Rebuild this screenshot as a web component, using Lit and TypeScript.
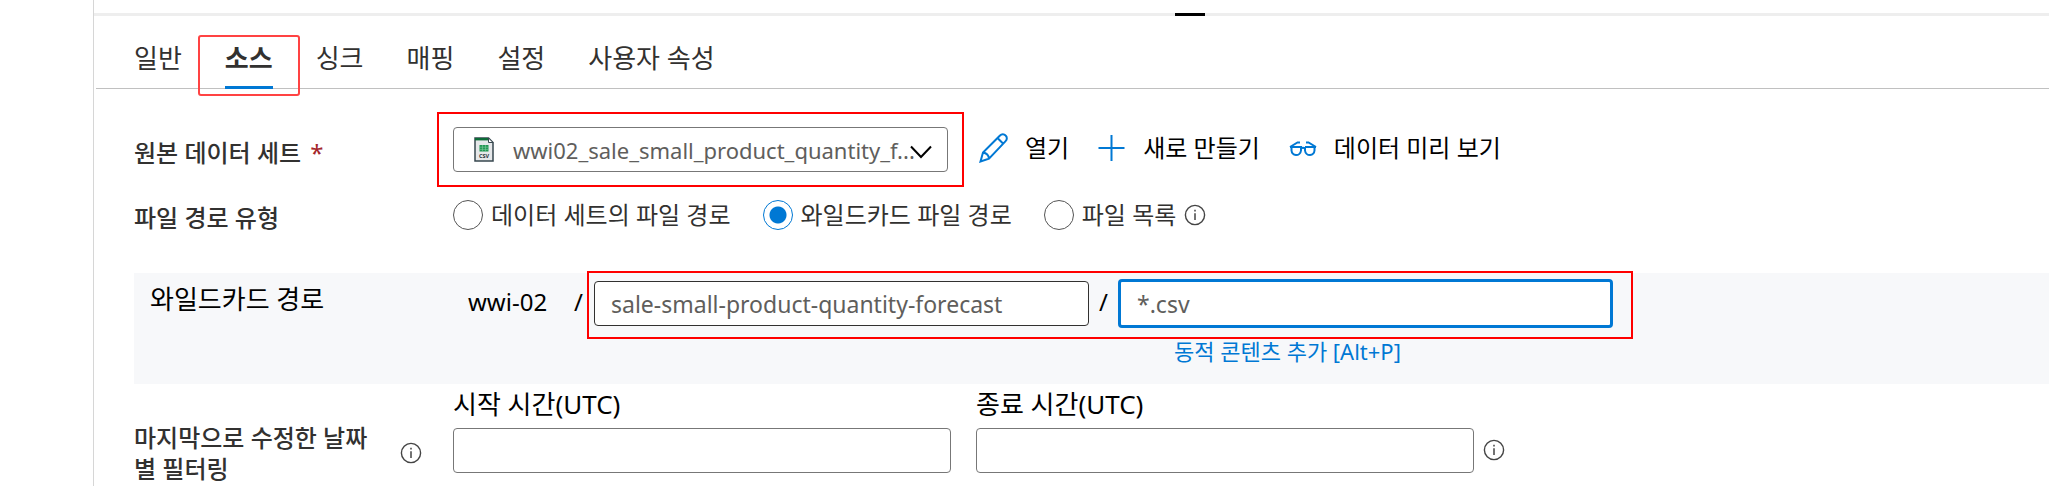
import { LitElement, html, css, svg } from "lit";
import { customElement, state } from "lit/decorators.js";

const infoIcon = html`<svg class="info" viewBox="0 0 22 22" role="img" aria-label="정보">
  <circle cx="11" cy="11" r="9.6" fill="none" stroke="#444" stroke-width="1.4" />
  <path d="M11 9.2V16M11 5.8V7.4" stroke="#444" stroke-width="1.5" fill="none" />
</svg>`;

const pencilIcon = svg`<path d="M1.5 28.5 4 19.5 21 2.5a3.8 3.8 0 0 1 5.6 0 3.8 3.8 0 0 1 0 5.6L10 25.6ZM4 19.5Q9.500 20.500 10 25.600M18.500 5 24.500 11" />`;
const plusIcon = svg`<path d="M14.500 2V28M1.500 15H27.500" />`;
const glassesIcon = svg`<path d="M2 14H13V17.500a5 5 0 0 1-5 4.500 5 5 0 0 1-4.500-4.500V14M17 14H28M26.500 14V17.500a5 5 0 0 1-4.500 4.500 5 5 0 0 1-5-4.500V14M13 15.500q2-1.600 4 0M2 14 9.500 9.500H12M28 14 20.500 9.500H18" />`;

const tabs = ["일반", "소스", "싱크", "매핑", "설정", "사용자 속성"];
const pathTypes = ["데이터 세트의 파일 경로", "와일드카드 파일 경로", "파일 목록"];
const commands = [
  { label: "열기", icon: pencilIcon },
  { label: "새로 만들기", icon: plusIcon },
  { label: "데이터 미리 보기", icon: glassesIcon },
];

@customElement("app-root")
export class AppRoot extends LitElement {
  @state() private tab = 1;
  @state() private pathType = 1;

  static styles = css`
    :host {
      display: block;
      background: #fff;
      color: #323130;
      font: 24px/32px "Noto Sans", "Noto Sans CJK KR", sans-serif;
      overflow: hidden;
    }
    * { box-sizing: border-box; }
    button, input, select { font: inherit; color: inherit; margin: 0; }
    .panel {
      margin-left: 93px;
      min-height: 100vh;
      border-left: 1px solid #d6d6d6;
      padding-top: 13px;
    }
    .splitter { height: 3px; background: #eee; display: flex; padding-left: 1081px; }
    .grip { width: 30px; background: #000; }
    .tabs {
      display: flex;
      gap: 43px;
      height: 73px;
      margin-left: 2px;
      padding-left: 38px;
      border-bottom: 1px solid #c0c0c0;
    }
    .tab {
      position: relative;
      height: 73px;
      padding: 10px 0 0;
      border: 0;
      background: none;
      font-size: 26px;
      white-space: nowrap;
    }
    .tab.active { font-weight: 700; border-bottom: 3px solid #0078d4; padding-top: 13px; }
    .tab.active::after {
      content: "";
      position: absolute;
      inset: 19px -27px -10px;
      border: 2px solid #ff4343;
      border-radius: 3px;
    }
    .form { padding: 38px 0 0 40px; }
    .row { display: grid; grid-template-columns: 319px 1fr; }
    .name { font-weight: 500; padding-top: 6px; align-self: center; }
    .star { color: #a4262c; font-weight: 400; margin-left: 3px; }
    .line { display: flex; align-items: center; }
    .mark { position: relative; }
    .mark::after {
      content: "";
      position: absolute;
      inset: -15px -16px;
      border: 2px solid #f00;
      pointer-events: none;
    }
    .box {
      display: block;
      width: 495px;
      height: 45px;
      border: 1px solid #777;
      border-radius: 4px;
      background: #fff;
      padding: 0 16px;
      outline: 0;
    }
    .dataset { appearance: none; padding: 0 4px 0 59px; font-size: 22px; color: #605e5c; }
    .file { position: absolute; left: 21px; top: 10px; width: 20px; height: 25px; }
    .chevron { position: absolute; right: 16px; top: 18px; width: 22px; height: 14px; pointer-events: none; }
    .commands { display: flex; gap: 28px; margin-left: 31px; padding-bottom: 4px; }
    .command {
      display: flex;
      align-items: center;
      gap: 16px;
      border: 0;
      padding: 0;
      background: none;
      color: #000;
      white-space: nowrap;
    }
    .command svg { width: 30px; height: 30px; fill: none; stroke: #0078d4; stroke-width: 2; }
    .types { margin-top: 24px; }
    .radios { gap: 32px; }
    .radio { display: flex; align-items: center; gap: 8px; white-space: nowrap; }
    .radio input {
      appearance: none;
      width: 30px;
      height: 30px;
      border: 1px solid #555;
      border-radius: 50%;
    }
    .radio input:checked {
      border-color: #0078d4;
      background: radial-gradient(circle, #0078d4 8px, #fff 9px);
    }
    .info { width: 22px; height: 22px; flex: none; }
    .radios .info { margin-left: -24px; }
    .wild {
      margin-top: 39px;
      height: 111px;
      padding: 6px 0 0 16px;
      grid-template-columns: 318px 1fr;
      background: #f7f8fa;
      color: #000;
    }
    .wildname { padding-top: 4px; font-size: 26px; }
    .line.top { align-items: flex-start; }
    .container { width: 106px; line-height: 45px; }
    .slash { width: 20px; line-height: 45px; }
    .paths { display: flex; align-items: center; }
    .paths.mark::after { inset: -8px -20px -11px -7px; }
    .paths .box { font-size: 23px; color: #605e5c; border-color: #323130; }
    .paths .box.focus { height: 49px; border: 3px solid #0078d4; }
    .paths .slash { width: 29px; text-align: center; align-self: flex-start; }
    .dynamic { display: block; margin: 7px 0 0 706px; font-size: 22px; color: #0078d4; text-decoration: none; }
    .filter { display: flex; align-items: center; font-weight: 500; padding-top: 38px; }
    .filter span { width: 250px; margin-right: 16px; line-height: 31px; }
    .ranges { display: flex; gap: 25px; padding-top: 4px; color: #000; }
    .range label { display: block; height: 40px; font-size: 26px; }
    .range .box { width: 498px; }
    .ranges .info { margin: 51px 0 0 -16px; }
  `;

  render() {
    return html`
      <main class="panel">
        <div class="splitter"><div class="grip"></div></div>
        <nav class="tabs" role="tablist">
          ${tabs.map((t, i) => html`<button role="tab" aria-selected=${i === this.tab}
            class=${i === this.tab ? "tab active" : "tab"} @click=${() => (this.tab = i)}>${t}</button>`)}
        </nav>
        <form class="form">
          <div class="row">
            <label class="name" for="dataset">원본 데이터 세트 <span class="star">*</span></label>
            <div class="line">
              <div class="mark">
                <select id="dataset" class="box dataset"><option>wwi02_sale_small_product_quantity_f...</option></select>
                <svg class="file" viewBox="0 0 20 25" aria-hidden="true">
                  <path d="M1 1H14.5L19 5.5V24H1Z" fill="#e6e8ea" stroke="#37474f" stroke-width="1.5" />
                  <path d="M1 1H14V3.4H1Z" fill="#0c6b37" />
                  <path d="M14.5 1V5.5H19Z" fill="#fff" stroke="#37474f" />
                  <path d="M5.5 8H14.5V14.5H5.5Z" fill="#219653" />
                  <path d="M5.5 10.2H14.5M5.5 12.4H14.5M8.5 8V14.5M11.5 8V14.5" stroke="#7ecb9c" stroke-width=".6" />
                  <text x="10" y="21.4" text-anchor="middle" font-size="5.5" font-weight="700" fill="#263238">CSV</text>
                </svg>
                <svg class="chevron" viewBox="0 0 22 14" aria-hidden="true">
                  <path d="M1 1.5 11 12 21 1.5" fill="none" stroke="#000" stroke-width="2" />
                </svg>
              </div>
              <div class="commands">
                ${commands.map((c) => html`<button type="button" class="command">
                  <svg viewBox="0 0 30 30" aria-hidden="true">${c.icon}</svg>${c.label}</button>`)}
              </div>
            </div>
          </div>
          <div class="row types">
            <span class="name" id="types">파일 경로 유형</span>
            <div class="line radios" role="radiogroup" aria-labelledby="types">
              ${pathTypes.map((p, i) => html`<label class="radio"><input type="radio" name="type"
                .checked=${i === this.pathType} @change=${() => (this.pathType = i)} />${p}</label>`)}
              ${infoIcon}
            </div>
          </div>
          <div class="row wild">
            <span class="wildname">와일드카드 경로</span>
            <div>
              <div class="line top">
                <span class="container">wwi-02</span><span class="slash">/</span>
                <div class="paths mark">
                  <input class="box" aria-label="폴더 경로" value="sale-small-product-quantity-forecast" />
                  <span class="slash">/</span>
                  <input class="box focus" aria-label="파일 이름" value="*.csv" />
                </div>
              </div>
              <a class="dynamic" href="#">동적 콘텐츠 추가 [Alt+P]</a>
            </div>
          </div>
          <div class="row">
            <div class="filter"><span>마지막으로 수정한 날짜별 필터링</span>${infoIcon}</div>
            <div class="ranges">
              <div class="range"><label for="start">시작 시간(UTC)</label><input id="start" class="box" /></div>
              <div class="range"><label for="end">종료 시간(UTC)</label><input id="end" class="box" /></div>
              ${infoIcon}
            </div>
          </div>
        </form>
      </main>
    `;
  }
}
